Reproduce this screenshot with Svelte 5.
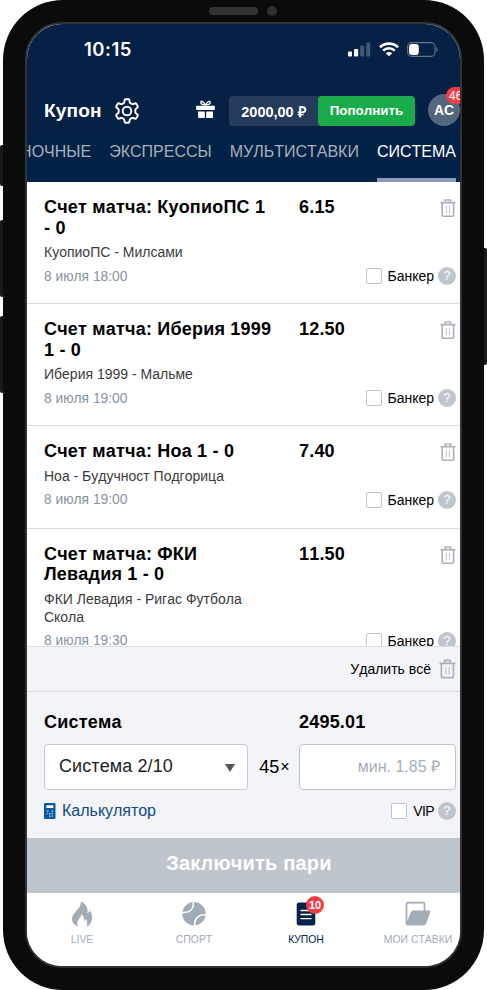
<script>
  const tabs = ['ОДИНОЧНЫЕ', 'ЭКСПРЕССЫ', 'МУЛЬТИСТАВКИ', 'СИСТЕМА'];
  let activeTab = $state('СИСТЕМА');

  let bets = $state([
    { title: 'Счет матча: КуопиоПС 1 - 0', match: 'КуопиоПС - Милсами', date: '8 июля 18:00', odds: '6.15', banker: false },
    { title: 'Счет матча: Иберия 1999 1 - 0', match: 'Иберия 1999 - Мальме', date: '8 июля 19:00', odds: '12.50', banker: false },
    { title: 'Счет матча: Ноа 1 - 0', match: 'Ноа - Будучност Подгорица', date: '8 июля 19:00', odds: '7.40', banker: false },
    { title: 'Счет матча: ФКИ Левадия 1 - 0', match: 'ФКИ Левадия - Ригас Футбола Скола', date: '8 июля 19:30', odds: '11.50', banker: false }
  ]);

  let vip = $state(false);

  const removeBet = (i) => bets.splice(i, 1);
</script>

{#snippet trash()}
  <svg class="trash" viewBox="0 0 16 18" fill="none" stroke="#a9b2bc">
    <path d="M0.5 3.7h15" stroke-width="1.7" />
    <path d="M5.2 3.5V0.9h5.4v2.6" stroke-width="1.5" />
    <path d="M2.2 4v12.2q0 1 1 1h9.4q1 0 1-1V4" stroke-width="1.6" />
    <path d="M6.4 7v7M9.5 7v7" stroke="#c3cad1" stroke-width="1.2" />
  </svg>
{/snippet}

<div class="phone">
  <i class="side silent"></i>
  <i class="side up"></i>
  <i class="side down"></i>
  <i class="side power"></i>
  <div class="speaker"><span></span><b></b></div>

  <div class="screen">
    <div class="status">
      <span class="time">10:15</span>
      <div class="signals">
        <svg width="23" height="15" viewBox="0 0 23 15" fill="#fff">
          <rect x="0" y="9.5" width="4" height="5" rx="1" />
          <rect x="6" y="7" width="4.2" height="7.5" rx="1" />
          <rect x="12.2" y="3.5" width="4" height="11" rx="1" opacity=".25" />
          <rect x="18.2" y="0.5" width="4" height="14" rx="1" opacity=".25" />
        </svg>
        <svg width="20" height="15" viewBox="0 0 20 15" fill="none" stroke="#fff">
          <path d="M1 5.2a13 13 0 0 1 18 0" stroke-width="2.7" />
          <path d="M4.2 8.6a8.3 8.3 0 0 1 11.6 0" stroke-width="2.6" />
          <path d="M6.8 11.2a4.6 4.6 0 0 1 6.4 0L10 14.3z" fill="#fff" stroke="none" />
        </svg>
        <svg width="31" height="15" viewBox="0 0 31 15">
          <rect x="0.6" y="0.6" width="27.4" height="13.8" rx="4" fill="none" stroke="#65758b" stroke-width="1.1" />
          <rect x="2" y="2.1" width="9.8" height="10.8" rx="3" fill="#fff" />
          <path d="M29.3 5v5q1.4-1 1.4-2.5T29.3 5z" fill="#65758b" />
        </svg>
      </div>
    </div>

    <header>
      <h1>Купон</h1>
      <svg class="gear" viewBox="0 0 26 26" fill="none" stroke="#fff" stroke-width="1.9" stroke-linejoin="round">
        <path d="M11.5 1.2h3q.8 0 .9.8l.3 2q.2.9 1 1.300l1 .6q.8.400 1.600.1l1.700-.7q.8-.3 1.200.4l1.500 2.600q.4.700-.2 1.200l-1.500 1.200q-.7.6-.7 1.400v1.800q0 .8.7 1.400l1.500 1.200q.6.500.2 1.200l-1.500 2.600q-.4.700-1.200.4l-1.700-.7q-.8-.3-1.600.1l-1 .6q-.8.400-1 1.300l-.3 2q-.1.8-.9.8h-3q-.8 0-.9-.8l-.3-2q-.2-.9-1-1.300l-1-.6q-.8-.4-1.600-.1l-1.700.7q-.8.3-1.200-.4l-1.500-2.600q-.4-.7.2-1.200l1.500-1.200q.7-.6.7-1.400v-1.800q0-.8-.7-1.400L2.500 9.500q-.6-.5-.2-1.200l1.500-2.600q.4-.7 1.200-.4l1.700.7q.8.3 1.600-.1l1-.6q.8-.4 1-1.300l.3-2q.1-.8.9-.8z" />
        <circle cx="13" cy="13" r="4.3" />
      </svg>
      <svg class="gift" viewBox="0 0 19 19" fill="#fff">
        <path d="M9.5 5C7 .2 4.600.6 4.800 2.800 5 4.800 7.500 4.800 9.500 4.800s4.500 0 4.700-2C14.400.6 12 .2 9.500 5z" fill="none" stroke="#fff" stroke-width="1.3" />
        <rect x="0.2" y="5.8" width="18.6" height="4.2" rx=".6" />
        <path d="M2 11.5h6.800V18H2.800q-.8 0-.8-.8zM10.200 11.500H17v5.700q0 .8-.8.8h-6z" />
      </svg>
      <div class="wallet">
        <span>2000,00 ₽</span>
        <button>Пополнить</button>
      </div>
      <div class="avatar">АС<em>46</em></div>
    </header>

    <nav class="tabs">
      {#each tabs as tab}
        <button class:active={tab === activeTab} onclick={() => (activeTab = tab)}>{tab}</button>
      {/each}
    </nav>

    <ul class="bets">
      {#each bets as bet, i}
        <li>
          <div class="row">
            <h2>{bet.title}</h2>
            <strong>{bet.odds}</strong>
            <button class="icon" aria-label="Удалить" onclick={() => removeBet(i)}>{@render trash()}</button>
          </div>
          <p>{bet.match}</p>
          <div class="meta">
            <time>{bet.date}</time>
            <label><input type="checkbox" bind:checked={bet.banker} />Банкер</label>
            <span class="help">?</span>
          </div>
        </li>
      {/each}
    </ul>

    <div class="clear">
      <span>Удалить всё</span>
      <button class="icon big" aria-label="Удалить всё" onclick={() => (bets = [])}>{@render trash()}</button>
    </div>

    <section class="system">
      <div class="totals">
        <h2>Система</h2>
        <strong>2495.01</strong>
      </div>
      <div class="fields">
        <button class="select"><span>Система 2/10</span><i></i></button>
        <span class="times">45<small>×</small></span>
        <input class="stake" type="text" placeholder="мин. 1.85 ₽" />
      </div>
      <div class="extras">
        <svg width="12" height="16" viewBox="0 0 12 16">
          <rect width="11.5" height="16" rx="1.2" fill="#0c5ba0" />
          <rect x="2.3" y="2.3" width="7" height="2.7" fill="#fff" />
          <path d="M3 8.200h1.400M7.500 8.200h1.400M5 10.700h1.400M7.500 10.700h1.400M3 10.700h.8M5 13.200h1.400M7.500 13.200h1.400" stroke="#c3d8ea" stroke-width="1.2" />
        </svg>
        <a href="#calc">Калькулятор</a>
        <label class="vip"><input type="checkbox" bind:checked={vip} />VIP</label>
        <span class="help">?</span>
      </div>
    </section>

    <button class="submit">Заключить пари</button>

    <nav class="bottom">
      <a href="#live">
        <svg viewBox="0 0 26 26" fill="#a2acb7">
          <path d="M12 0c6 4 7.300 8 6.300 12.300 1.500-.6 2.200-1.600 2.300-3.300 2.800 4.300 3 8 1.800 11.300-.8 2.400-2.200 4.200-4.700 5.500.9-3.300.5-5.800-1-8-.2 1.300-.7 2.100-1.500 2.600.2-3.200-.8-6-2.700-7.300.2 3.400-4.700 5.600-4.200 9.800.1 1.200.5 2.200 1 2.900C5 24 3 21.500 3 17.800 3 11 12.400 8.500 12 0z" />
        </svg>
        <span>LIVE</span>
      </a>
      <a href="#sport">
        <svg viewBox="0 0 26 26">
          <circle cx="13" cy="12.700" r="11.700" fill="#a2acb7" />
          <path d="M.5 11.200C8 12.500 13 9 12.400.5M25.500 13.800C18 12.800 13 17 13.700 25.500" fill="none" stroke="#fff" stroke-width="1.5" />
        </svg>
        <span>СПОРТ</span>
      </a>
      <a class="current" href="#coupon">
        <svg viewBox="0 0 26 26">
          <rect x="3.700" y="1.500" width="18.600" height="23" rx="2.500" fill="#04224a" />
          <path d="M7.500 9.500h11M7.500 13.500h11M7.500 17.700h11" stroke="#fff" stroke-width="1.3" />
        </svg>
        <em>10</em>
        <span>КУПОН</span>
      </a>
      <a href="#bets">
        <svg viewBox="0 0 26 26">
          <path d="M1.500 23V3q0-1.300 1.300-1.300h15.400q1.300 0 1.300 1.300V10" fill="none" stroke="#a2acb7" stroke-width="1.7" />
          <path d="M8.100 9.500h16.200q1.500 0 1 1.400l-4.300 11.800q-.6 1.700-2.300 1.700H2.100q-1.500 0-1-1.400L6 11q.6-1.500 2.100-1.500z" fill="#a2acb7" />
        </svg>
        <span>МОИ СТАВКИ</span>
      </a>
    </nav>
  </div>
</div>

<style>
  :global(body) {
    background: #fff;
    font-family: "Liberation Sans", Arial, sans-serif;
    font-kerning: none;
  }

  .phone {
    position: relative;
    box-sizing: border-box;
    width: 481px;
    height: 990px;
    margin-left: 3px;
    padding: 22px;
    border-radius: 60px;
    background: #0b0b0b;
  }

  .side {
    position: absolute;
    left: -3px;
    width: 3px;
    border-radius: 2px 0 0 2px;
    background: #1a1a1a;
  }
  .silent { top: 145px; height: 41px; }
  .up { top: 220px; height: 77px; }
  .down { top: 316px; height: 77px; }
  .power {
    left: auto;
    right: -3px;
    top: 248px;
    height: 117px;
    border-radius: 0 2px 2px 0;
  }

  .speaker {
    position: absolute;
    top: 6px;
    left: 206px;
    display: flex;
    align-items: center;
    gap: 9px;
  }
  .speaker span {
    width: 49px;
    height: 8px;
    border-radius: 4px;
    background: #333;
  }
  .speaker b {
    width: 10px;
    height: 10px;
    border-radius: 50%;
    background: #2f2f2f;
  }

  .screen {
    box-sizing: border-box;
    display: flex;
    flex-direction: column;
    height: 946px;
    border: 2px solid #323232;
    border-radius: 37px;
    overflow: hidden;
    background: #fff;
  }

  button {
    margin: 0;
    padding: 0;
    border: 0;
    background: none;
    font-family: inherit;
    font-kerning: inherit;
    cursor: pointer;
  }

  h1, h2, p, ul {
    margin: 0;
    padding: 0;
  }

  em {
    font-style: normal;
  }

  .status {
    flex: none;
    display: flex;
    justify-content: space-between;
    align-items: center;
    height: 50px;
    padding: 0 22px 0 57px;
    background: #052146;
    color: #fff;
  }
  .time {
    font-family: Inter, sans-serif;
    font-weight: 600;
    font-size: 18.5px;
    letter-spacing: 0.5px;
  }
  .signals {
    display: flex;
    align-items: center;
    gap: 8px;
  }

  header {
    flex: none;
    display: flex;
    align-items: center;
    height: 63px;
    padding: 10px 0 0 17px;
    box-sizing: border-box;
    background: #052146;
    color: #fff;
  }
  h1 {
    width: 70px;
    font-size: 19px;
    line-height: 22px;
    letter-spacing: 0.2px;
  }
  .gear {
    width: 26px;
    height: 26px;
  }
  .gift {
    width: 19px;
    height: 19px;
    margin: 0 14px 2px 56px;
  }
  .wallet {
    display: flex;
    align-items: center;
    width: 186px;
    height: 30px;
    border-radius: 4px;
    background: #243b5c;
    font-weight: bold;
    font-size: 14.5px;
  }
  .wallet span {
    flex: 1;
    text-align: center;
    white-space: nowrap;
  }
  .wallet button {
    width: 97px;
    height: 30px;
    border-radius: 4px;
    background: #1aab4b;
    color: #fff;
    font-weight: bold;
    font-size: 13.4px;
  }
  .avatar {
    position: relative;
    flex: none;
    width: 32px;
    height: 32px;
    margin: 0 0 2px 13px;
    border-radius: 50%;
    background: #55677f;
    font-weight: bold;
    font-size: 14px;
    line-height: 33px;
    text-align: center;
  }
  .avatar em {
    position: absolute;
    left: 18px;
    top: -7px;
    width: 24px;
    height: 17px;
    border-radius: 9px;
    background: #f03e47;
    font-weight: normal;
    font-size: 12px;
    line-height: 18px;
    text-indent: 3px;
    text-align: left;
  }

  .tabs {
    flex: none;
    display: flex;
    justify-content: flex-end;
    gap: 18px;
    height: 45px;
    padding-right: 4px;
    background: #012247;
  }
  .tabs button {
    height: 45px;
    padding-bottom: 12px;
    box-sizing: border-box;
    border-bottom: 4px solid transparent;
    color: #a9b0b8;
    font-size: 16px;
    white-space: nowrap;
  }
  .tabs .active {
    border-color: #8d9bbd;
    color: #fff;
  }

  .bets {
    flex: 1;
    min-height: 0;
    overflow: hidden;
    list-style: none;
  }
  li {
    box-sizing: border-box;
    min-height: 102.5px;
    padding: 15px 4px 18px 17px;
    border-bottom: 1px solid #dadde3;
  }
  .row {
    display: flex;
    align-items: flex-start;
  }
  h2, strong {
    font-weight: bold;
    font-size: 18px;
    line-height: 20.5px;
    letter-spacing: 0.2px;
  }
  .row h2 {
    width: 229px;
    margin-right: 26px;
  }
  .icon {
    width: 16px;
    height: 18px;
    margin: 2px 0 0 auto;
  }
  .trash {
    display: block;
    width: 100%;
    height: 100%;
  }
  li p {
    width: 230px;
    margin: 5px 0 6px;
    color: #3b3b3b;
    font-size: 14px;
    line-height: 18px;
  }
  .meta, .extras {
    display: flex;
    align-items: center;
    height: 18px;
  }
  time {
    color: #8593a1;
    font-size: 13.8px;
  }
  label {
    display: flex;
    align-items: center;
    margin-left: auto;
    font-size: 14px;
  }
  .vip {
    letter-spacing: -0.6px;
  }
  input[type="checkbox"] {
    appearance: none;
    box-sizing: border-box;
    width: 16px;
    height: 16px;
    margin: 0 6px 0 0;
    border: 1px solid #bec6ce;
    border-radius: 2px;
    background: #fff;
  }
  .help {
    width: 18px;
    height: 18px;
    margin-left: 4px;
    border-radius: 50%;
    background: #bec5cd;
    color: #fff;
    font-size: 12.5px;
    line-height: 18px;
    text-align: center;
  }

  .clear {
    flex: none;
    display: flex;
    align-items: center;
    justify-content: flex-end;
    box-sizing: border-box;
    height: 45px;
    padding-right: 4px;
    border-top: 1px solid #dadde3;
    background: #f3f4f7;
    font-size: 14px;
  }
  .clear .big {
    width: 17px;
    height: 20px;
    margin: 0 0 0 8px;
  }

  .system {
    flex: none;
    box-sizing: border-box;
    height: 147px;
    padding: 20px 4px 0 17px;
    border-top: 1px solid #d5d9de;
    background: #f3f4f7;
  }
  .totals {
    display: flex;
    height: 32px;
  }
  .totals h2 {
    width: 255px;
  }
  .fields {
    display: flex;
    align-items: center;
  }
  .select {
    display: flex;
    align-items: center;
    justify-content: space-between;
    box-sizing: border-box;
    width: 204px;
    height: 46px;
    padding: 0 12px 2px 14px;
    border: 1px solid #c3cad1;
    border-radius: 4px;
    background: #fff;
    color: #222;
    font-size: 18px;
    letter-spacing: 0.1px;
  }
  .select i {
    border: 5px solid transparent;
    border-top: 8px solid #555;
    border-bottom: 0;
    margin-top: 4px;
  }
  .times {
    display: flex;
    align-items: center;
    justify-content: center;
    width: 51px;
    padding-left: 2px;
    box-sizing: border-box;
    font-size: 18px;
  }
  .times small {
    margin-left: 1px;
    font-size: 16px;
  }
  .stake {
    box-sizing: border-box;
    width: 157px;
    height: 46px;
    padding: 0 15px;
    border: 1px solid #bcc5ce;
    border-radius: 4px;
    background: #fff;
    font-family: inherit;
    font-size: 16px;
    text-align: right;
  }
  .stake::placeholder {
    color: #a3adb8;
  }
  .extras {
    margin-top: 12px;
  }
  .extras a {
    margin-left: 6px;
    color: #104a80;
    font-size: 16px;
    text-decoration: none;
  }

  .submit {
    flex: none;
    height: 55px;
    padding: 0 0 4px 11px;
    background: #bec5cd;
    color: #fff;
    font-weight: bold;
    font-size: 20px;
    letter-spacing: 0.2px;
  }

  .bottom {
    flex: none;
    display: grid;
    grid-template-columns: repeat(4, 112px);
    height: 73px;
    margin-left: -1px;
    background: #fff;
  }
  .bottom a {
    position: relative;
    display: flex;
    flex-direction: column;
    align-items: center;
    gap: 7px;
    padding-top: 8px;
    color: #a2acb7;
    font-size: 10.4px;
    text-decoration: none;
    white-space: nowrap;
  }
  .bottom svg {
    width: 26px;
    height: 26px;
  }
  .bottom .current {
    color: #04224a;
  }
  .bottom em {
    position: absolute;
    left: 56px;
    top: 3px;
    width: 18px;
    height: 18px;
    border-radius: 50%;
    background: #f03e47;
    color: #fff;
    font-weight: bold;
    font-size: 11px;
    line-height: 18px;
    text-align: center;
  }
</style>
